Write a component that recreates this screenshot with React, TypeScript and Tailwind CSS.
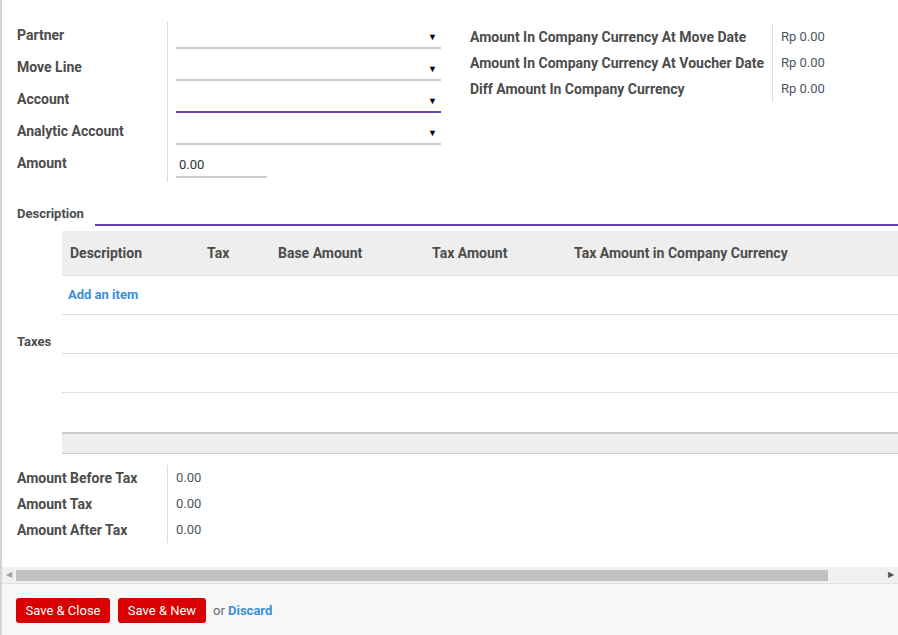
const labelCls = "text-[14px] font-bold text-[#4c4c4c] leading-[16px]"

function Arrow() {
  return <span className="text-[9px] leading-none text-black pr-[4px] pb-[5px]">▼</span>
}

function FieldRow({ label, focus, amount }: { label: string; focus?: boolean; amount?: boolean }) {
  return (
    <div className="flex h-[32px]">
      <div className="w-[150px] h-[26px] flex items-center">
        <span className={labelCls}>{label}</span>
      </div>
      <div className="flex-1 border-l border-[#ddd] pl-[8px]">
        {amount ? (
          <div className="w-[91px] h-[28px] border-b-2 border-[#ccc] flex items-end pb-[2px] pl-[3px] text-[13px] text-[#333]">
            0.00
          </div>
        ) : (
          <div
            className={`w-[265px] h-[27px] flex items-end justify-end ${
              focus ? "border-b-2 border-[#6a3fb0]" : "border-b-2 border-[#ccc]"
            }`}
          >
            <Arrow />
          </div>
        )}
      </div>
    </div>
  )
}

function InfoRow({ label, value, w }: { label: string; value: string; w: string }) {
  return (
    <div className="flex h-[26px]">
      <div className={`${w} flex items-center`}>
        <span className={labelCls}>{label}</span>
      </div>
      <div className="border-l border-[#ddd] pl-[8px] flex items-center text-[13px] text-[#4c5563]">{value}</div>
    </div>
  )
}

export default function App() {
  return (
    <div
      className="w-[898px] h-[635px] bg-white border-l-2 border-[#d4d4d4] flex flex-col overflow-hidden"
      style={{ fontFamily: "Roboto, 'Liberation Sans', sans-serif" }}
    >
      <div className="flex-1">
        {/* top groups */}
        <div className="flex pt-[22px] pl-[15px]">
          <div className="w-[453px]">
            <FieldRow label="Partner" />
            <FieldRow label="Move Line" />
            <FieldRow label="Account" focus />
            <FieldRow label="Analytic Account" />
            <FieldRow label="Amount" amount />
          </div>
          <div className="pt-[2px]">
            <InfoRow label="Amount In Company Currency At Move Date" value="Rp 0.00" w="w-[302px]" />
            <InfoRow label="Amount In Company Currency At Voucher Date" value="Rp 0.00" w="w-[302px]" />
            <InfoRow label="Diff Amount In Company Currency" value="Rp 0.00" w="w-[302px]" />
          </div>
        </div>

        {/* description */}
        <div className="flex items-end pl-[15px] mt-[19px]">
          <div className="w-[78px] pb-[1px]">
            <span className="text-[13px] font-bold text-[#4c4c4c]">Description</span>
          </div>
          <div className="flex-1 h-[25px] border-b-2 border-[#6a3fb0]" />
        </div>

        {/* taxes table */}
        <div className="flex items-center mt-[5px]">
          <div className="w-[60px] pl-[15px] pb-[4px]">
            <span className="text-[13px] font-bold text-[#4c4c4c]">Taxes</span>
          </div>
          <div className="flex-1">
            <div className="flex h-[45px] items-center bg-[#eeeeee] border-b border-[#ddd] text-[14px] font-bold text-[#4c4c4c]">
              <div className="w-[137px] pl-[8px]">Description</div>
              <div className="w-[71px] pl-[8px]">Tax</div>
              <div className="w-[154px] pl-[8px]">Base Amount</div>
              <div className="w-[142px] pl-[8px]">Tax Amount</div>
              <div className="flex-1 pl-[8px]">Tax Amount in Company Currency</div>
            </div>
            <div className="h-[39px] border-b border-[#ddd] flex items-center pl-[6px]">
              <span className="text-[13px] font-bold text-[#3b8ed8]">Add an item</span>
            </div>
            <div className="h-[39px] border-b border-[#ddd]" />
            <div className="h-[39px] border-b border-[#ddd]" />
            <div className="h-[39px]" />
            <div className="h-[22px] bg-[#eeeeee] border-t-2 border-[#ccc] border-b border-b-[#ccc]" />
          </div>
        </div>

        {/* totals */}
        <div className="pl-[15px] mt-[11px]">
          <InfoRow label="Amount Before Tax" value="0.00" w="w-[150px]" />
          <InfoRow label="Amount Tax" value="0.00" w="w-[150px]" />
          <InfoRow label="Amount After Tax" value="0.00" w="w-[150px]" />
        </div>
      </div>

      {/* horizontal scrollbar */}
      <div className="h-[16px] bg-[#f0f0f0] flex items-center">
        <div className="w-[14px] flex justify-center">
          <span className="text-[8px] leading-none text-[#a3a3a3]">◀</span>
        </div>
        <div className="w-[812px] h-[11px] bg-[#c1c1c1]" />
        <div className="flex-1" />
        <div className="w-[14px] flex justify-center">
          <span className="text-[8px] leading-none text-[#505050]">▶</span>
        </div>
      </div>

      {/* footer */}
      <div className="h-[52px] bg-[#f7f7f7] border-t border-[#e2e2e2] flex items-start pt-[14px] pl-[14px] gap-[8px]">
        <button className="h-[25px] w-[94px] rounded-[3px] bg-[#d80000] text-white text-[13px]">Save &amp; Close</button>
        <button className="h-[25px] w-[88px] rounded-[3px] bg-[#d80000] text-white text-[13px]">Save &amp; New</button>
        <span className="text-[13px] leading-[25px] text-[#666] ml-[-1px]">
          or <span className="font-bold text-[#3b8ed8]">Discard</span>
        </span>
      </div>
    </div>
  )
}
